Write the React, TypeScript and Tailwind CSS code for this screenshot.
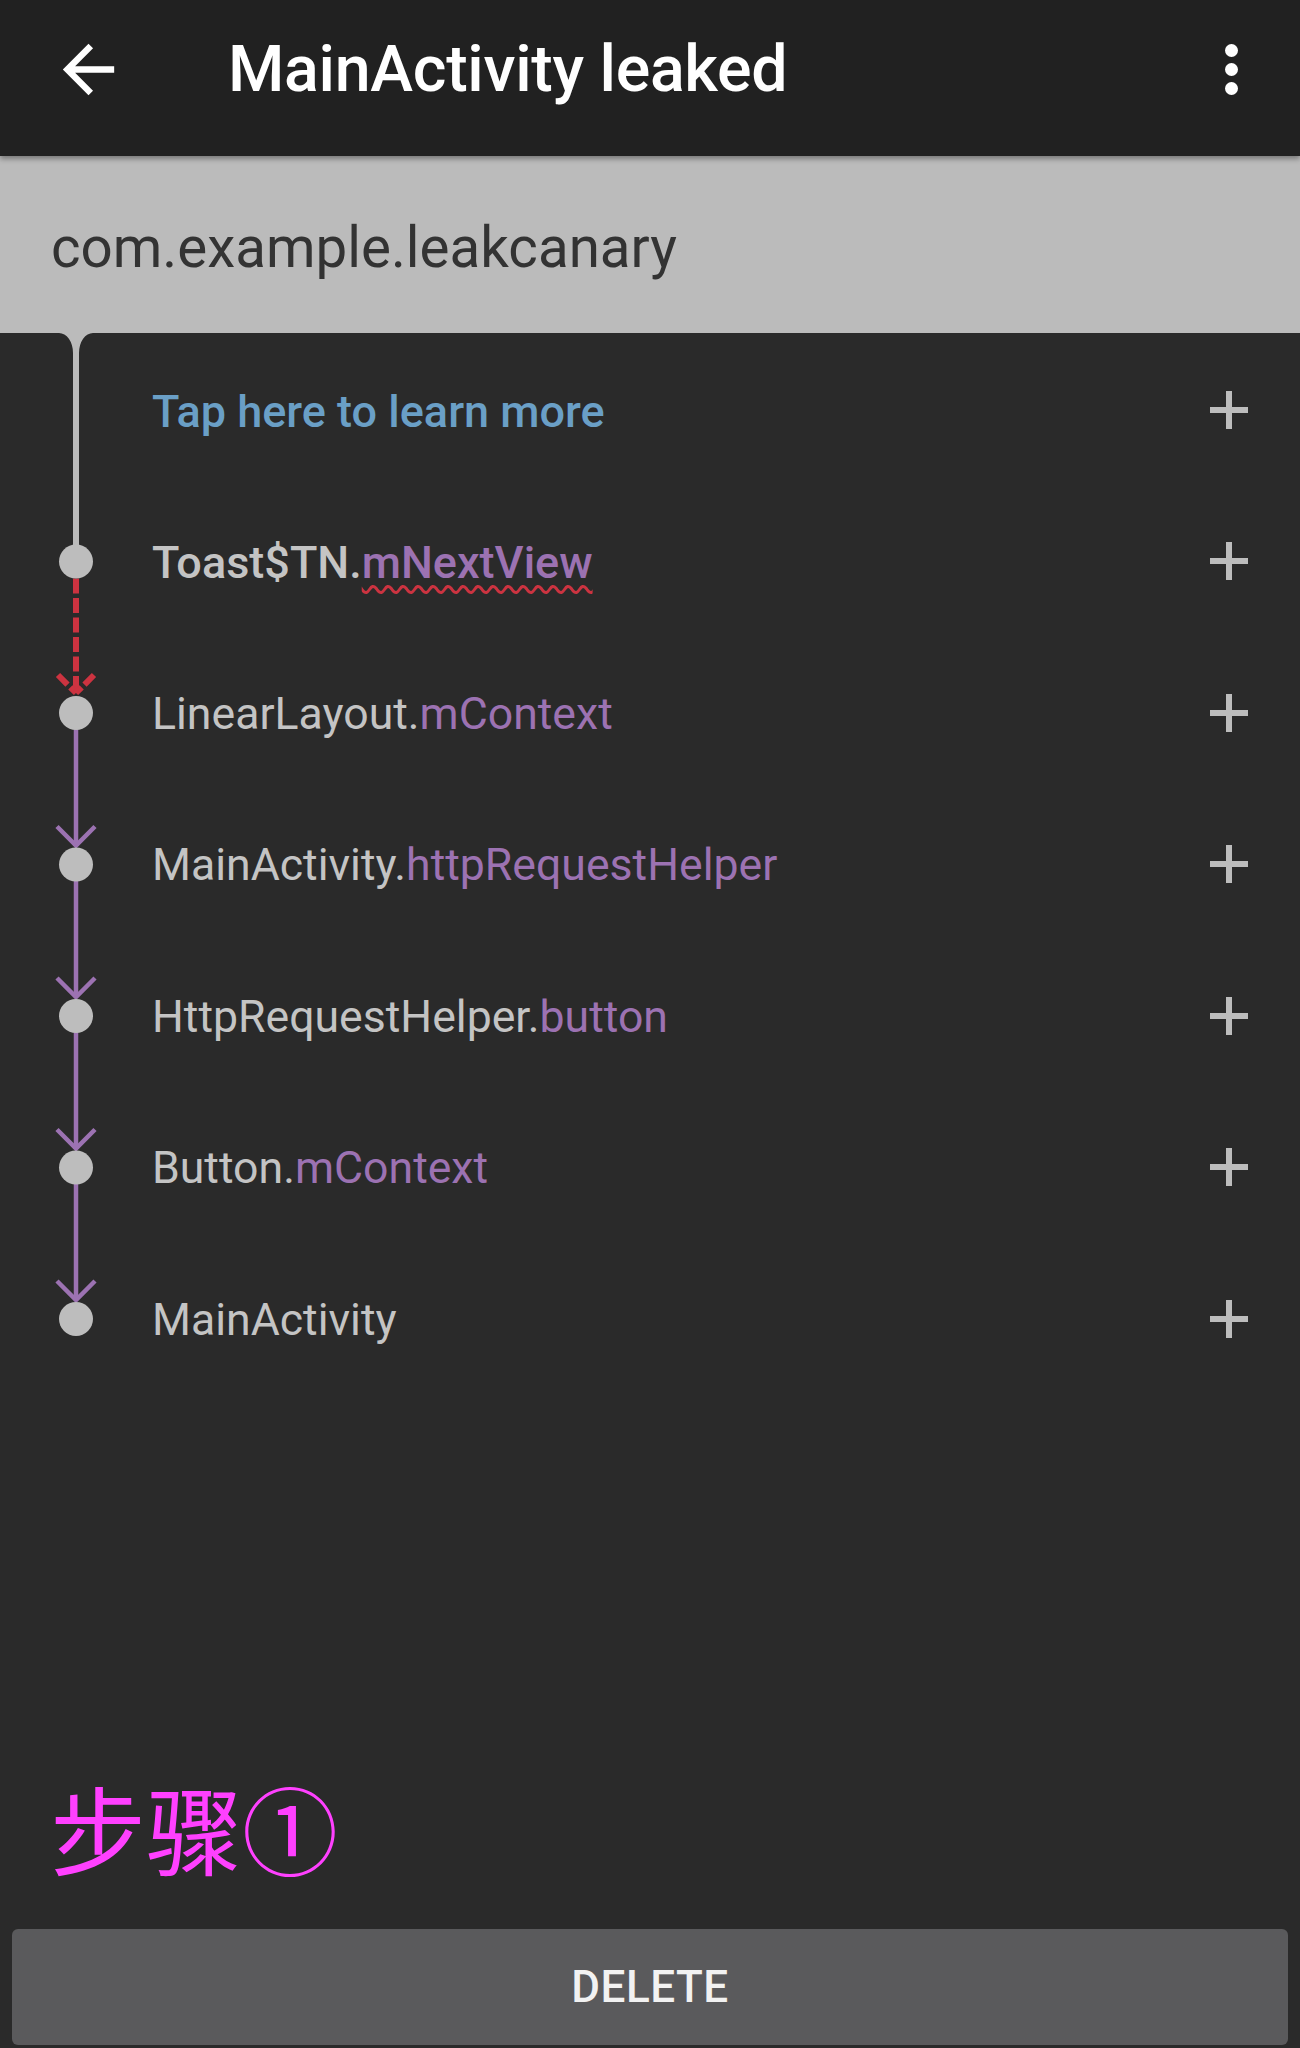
import React from "react";

type Row = { cls: string; field?: string; bold?: boolean; link?: boolean; wavy?: boolean };

const rows: Row[] = [
  { cls: "Tap here to learn more", link: true, bold: true },
  { cls: "Toast$TN.", field: "mNextView", bold: true, wavy: true },
  { cls: "LinearLayout.", field: "mContext" },
  { cls: "MainActivity.", field: "httpRequestHelper" },
  { cls: "HttpRequestHelper.", field: "button" },
  { cls: "Button.", field: "mContext" },
  { cls: "MainActivity" },
];

const DOT0 = 228.5;
const STEP = 151.5;
const CX = 76;

function Timeline() {
  const dots = [0, 1, 2, 3, 4, 5].map((k) => DOT0 + k * STEP);
  const purple = "#9c72b2";
  const red = "#cc3340";
  return (
    <svg width="150" height="1062" viewBox="0 0 150 1062" className="shrink-0 block">
      <path
        d={`M59,0 A14,20 0 0 1 73,20 L73,${DOT0} L79,${DOT0} L79,20 A14,20 0 0 1 93,0 Z`}
        fill="#bbbbbb"
      />
      <line
        x1={CX}
        y1={dots[0] + 17}
        x2={CX}
        y2={dots[1] - 20}
        stroke={red}
        strokeWidth="6"
        strokeDasharray="15 4.5"
      />
      <line x1={CX} y1={dots[1] - 20} x2={CX - 18} y2={dots[1] - 38} stroke={red} strokeWidth="6" strokeDasharray="8 4 14" />
      <line x1={CX} y1={dots[1] - 20} x2={CX + 18} y2={dots[1] - 38} stroke={red} strokeWidth="6" strokeDasharray="8 4 14" />
      {[1, 2, 3, 4].map((k) => {
        const tip = dots[k + 1] - 19;
        return (
          <g key={k} stroke={purple} strokeWidth="4.5" fill="none">
            <line x1={CX} y1={dots[k] + 16} x2={CX} y2={tip} />
            <polyline points={`${CX - 19},${tip - 19} ${CX},${tip} ${CX + 19},${tip - 19}`} />
          </g>
        );
      })}
      {dots.map((y, i) => (
        <circle key={i} cx={CX} cy={y} r="17" fill="#bdbdbd" />
      ))}
    </svg>
  );
}

function Plus() {
  return (
    <svg width="38" height="38" viewBox="0 0 38 38" className="block">
      <rect x="16" y="0" width="6" height="38" fill="#bdbdbd" />
      <rect x="0" y="16" width="38" height="6" fill="#bdbdbd" />
    </svg>
  );
}

export default function App() {
  return (
    <div className="w-[1300px] h-[2048px] flex flex-col bg-[#2a2a2a] overflow-hidden font-['Roboto','Noto_Sans',sans-serif]">
      {/* Toolbar */}
      <div className="relative z-10 h-[156px] shrink-0 bg-[#212121] flex items-center pb-[18px] shadow-[0_3px_5px_rgba(0,0,0,0.35)]">
        <div className="w-[228px] pl-[50px] flex items-center">
          <svg width="77" height="77" viewBox="0 0 24 24" fill="#ffffff">
            <path d="M20 11H7.83l5.59-5.59L12 4l-8 8 8 8 1.41-1.41L7.83 13H20v-2z" />
          </svg>
        </div>
        <div className="flex-1 text-white text-[64.5px] font-medium leading-none tracking-[-0.3px]">
          MainActivity leaked
        </div>
        <div className="w-[138px] flex flex-col items-center gap-[6px]">
          <span className="w-[13px] h-[13px] rounded-full bg-white" />
          <span className="w-[13px] h-[13px] rounded-full bg-white" />
          <span className="w-[13px] h-[13px] rounded-full bg-white" />
        </div>
      </div>

      {/* Header */}
      <div className="h-[177px] shrink-0 bg-[#bbbbbb] flex items-center pl-[51px] pt-[8px]">
        <span className="text-[56.5px] leading-none text-[#333333]">com.example.leakcanary</span>
      </div>

      {/* Leak trace */}
      <div className="flex shrink-0">
        <Timeline />
        <div className="flex-1 flex flex-col pt-[1px]">
          {rows.map((r, i) => (
            <div key={i} className="h-[151.5px] flex items-center pr-[52px] pl-[2px]">
              <div
                className={`flex-1 leading-none whitespace-nowrap pt-[3px] ${
                  r.bold ? "font-medium text-[45px]" : "font-normal text-[44.6px]"
                } ${r.link ? "text-[#6a9fc6]" : "text-[#c4c4c4]"}`}
              >
                {r.cls}
                {r.field && (
                  <span
                    className={`text-[#9c72b2] ${
                      r.wavy
                        ? "underline decoration-wavy decoration-[#cc3340] decoration-[3px] underline-offset-[7px]"
                        : ""
                    }`}
                  >
                    {r.field}
                  </span>
                )}
              </div>
              <Plus />
            </div>
          ))}
        </div>
      </div>

      <div className="flex-1" />

      {/* Step label */}
      <div className="h-[96px] shrink-0 pl-[50px] text-[96px] leading-none text-[#ff40ff] font-['Noto_Sans_CJK_SC','Noto_Sans_CJK_JP',sans-serif]">
        步骤①
      </div>

      {/* Delete button */}
      <div className="mt-[54px] mb-[3px] mx-[12px] h-[116px] shrink-0 rounded-[6px] bg-[#5a5a5c] flex items-center justify-center">
        <span className="text-[44px] font-medium leading-none text-[#f2f2f2] tracking-[0.5px]">DELETE</span>
      </div>
    </div>
  );
}
